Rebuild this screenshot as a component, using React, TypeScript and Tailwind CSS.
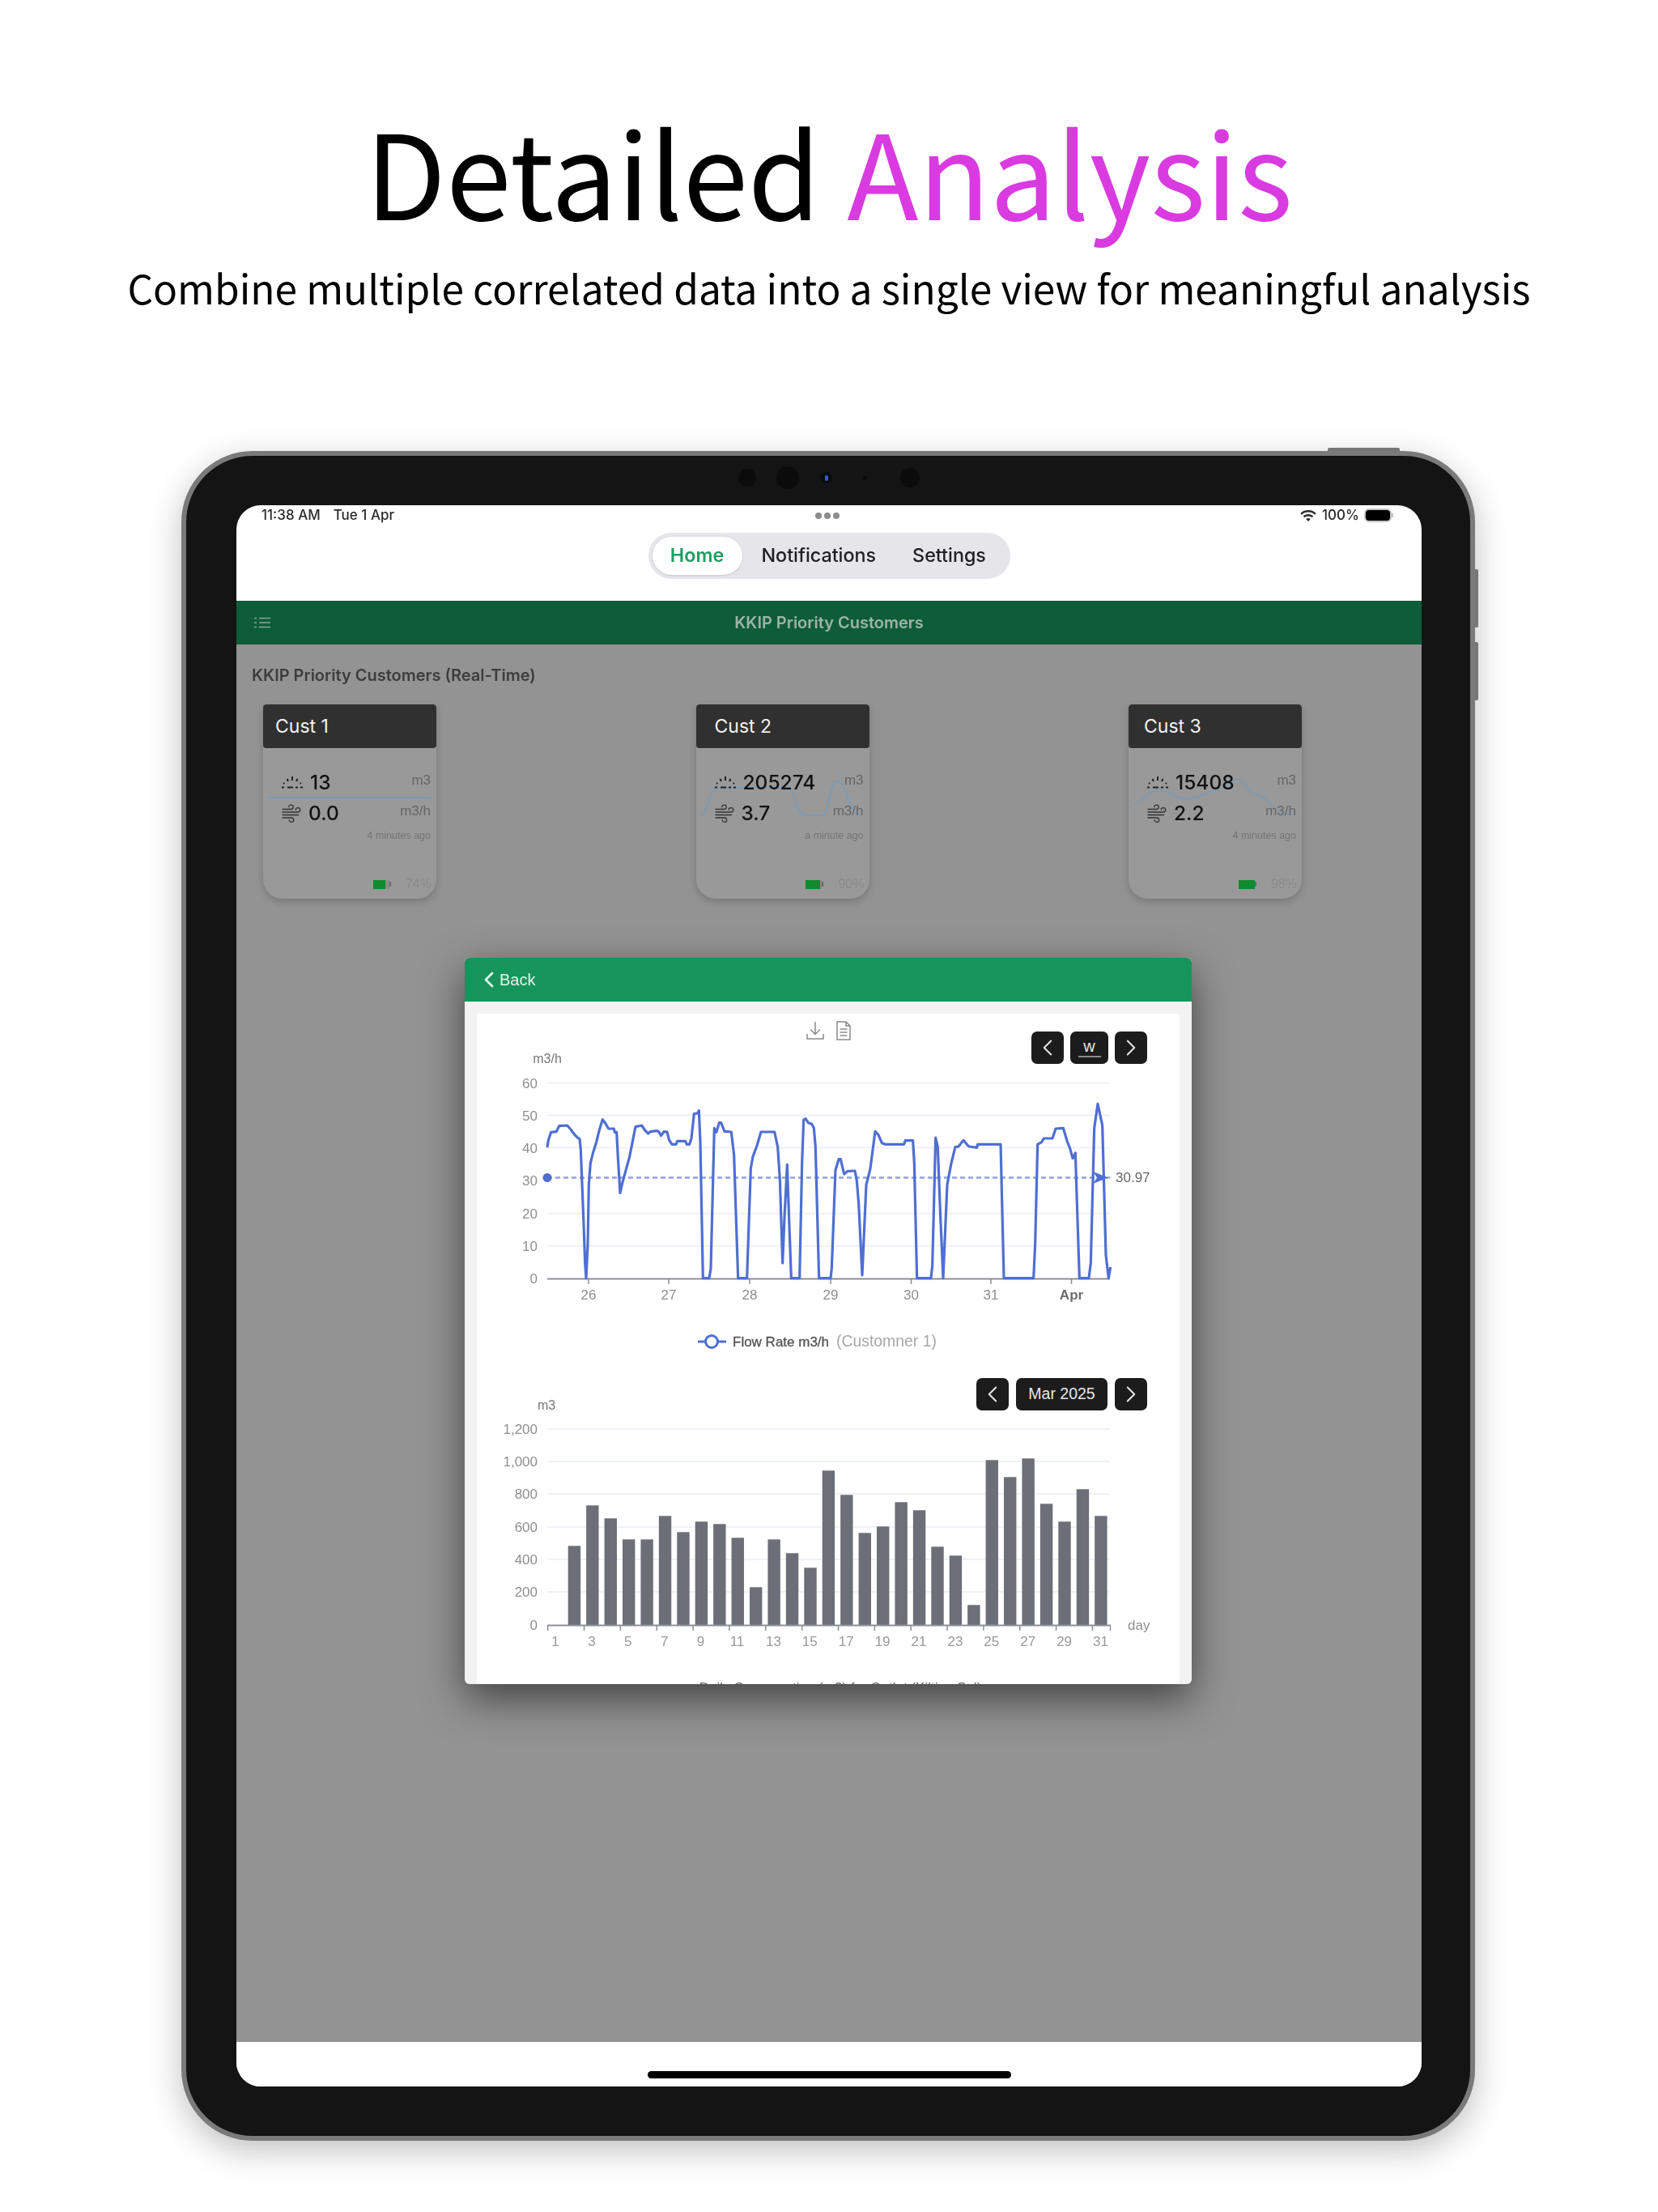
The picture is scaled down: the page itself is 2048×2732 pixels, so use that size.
import { ChevronLeft, ChevronRight } from "lucide-react";

type Customer = {
  name: string;
  titlePad: string;
  total: string;
  flow: string;
  updated: string;
  battery: number;
  spark: string;
};

const customers: Customer[] = [
  {
    name: "Cust 1",
    titlePad: "pl-[15px]",
    total: "13",
    flow: "0.0",
    updated: "4 minutes ago",
    battery: 74,
    spark: "M6 115H208",
  },
  {
    name: "Cust 2",
    titlePad: "pl-[23px]",
    total: "205274",
    flow: "3.7",
    updated: "a minute ago",
    battery: 90,
    spark: "M6 137C14 137 16 104 24 103L112 102C122 103 124 137 134 137H156C164 137 164 96 174 95C186 94 188 137 204 137",
  },
  {
    name: "Cust 3",
    titlePad: "pl-[19px]",
    total: "15408",
    flow: "2.2",
    updated: "4 minutes ago",
    battery: 98,
    spark: "M6 123C14 123 22 108 36 106C50 104 58 118 72 117C84 116 94 110 118 102C128 98 130 90 137 93C146 98 148 108 154 110C160 112 164 112 168 116C176 124 180 133 205 137",
  },
];

// flow trace, in 3x crop units; the two halves have different origins
const flowLeft = [
  [318, 742], [322, 715], [332, 685], [352, 683], [362, 662], [392, 660], [405, 675], [420, 695], [432, 707], [438, 710],
  [442, 750], [452, 1000], [458, 1170], [462, 1226], [468, 1100], [472, 880], [478, 800], [488, 760], [500, 722], [510, 680],
  [523, 638], [532, 650], [545, 672], [565, 672], [568, 685], [575, 685], [580, 780], [588, 910], [597, 870], [608, 830],
  [622, 780], [632, 730], [645, 665], [668, 660], [680, 678], [692, 690], [700, 683], [722, 680], [730, 682], [740, 698],
  [750, 683], [762, 684], [770, 715], [780, 730], [795, 730], [800, 718], [830, 718], [835, 730], [845, 730], [852, 708],
  [862, 617], [875, 615], [880, 605], [885, 720], [895, 1226], [918, 1226], [924, 1190], [937, 670], [945, 685], [955, 650],
  [962, 650], [975, 682], [1000, 684], [1010, 770], [1025, 1226], [1058, 1226], [1072, 820], [1080, 775], [1095, 735], [1110, 684],
  [1160, 684], [1172, 740], [1180, 860], [1190, 1170], [1197, 1000], [1207, 805], [1212, 950], [1222, 1226], [1253, 1226], [1262, 800],
  [1268, 640], [1275, 635], [1285, 650], [1298, 655], [1306, 670], [1312, 740], [1325, 1226], [1368, 1226], [1372, 1190], [1386, 825],
  [1398, 785], [1405, 785], [1418, 840], [1430, 830], [1458, 828], [1465, 865], [1472, 950], [1485, 1215],
];
const flowRight = [
  [90, 880], [105, 820], [123, 682], [135, 695], [148, 725], [160, 730], [230, 730], [235, 716], [263, 716], [268, 800],
  [278, 1226], [330, 1226], [335, 1180], [347, 705], [355, 740], [365, 1000], [375, 1226], [390, 880], [405, 800], [420, 740],
  [432, 738], [450, 715], [470, 738], [500, 742], [503, 730], [588, 730], [600, 1226], [710, 1226], [716, 1100], [725, 730],
  [740, 722], [748, 708], [780, 708], [792, 672], [820, 670], [835, 720], [845, 745], [855, 782], [865, 762], [880, 1226],
  [915, 1226], [922, 1170], [935, 670], [948, 580], [965, 660], [978, 1140], [988, 1226], [995, 1185],
];
const flowPoints = [
  ...flowLeft.map(([x, y]) => `${570 + x / 3},${1170 + y / 3}`),
  ...flowRight.map(([x, y]) => `${1040 + x / 3},${1170 + y / 3}`),
].join(" ");

const flowTicks = [
  { label: "60", y: 1337.7 },
  { label: "50", y: 1377.5 },
  { label: "40", y: 1417.5 },
  { label: "30", y: 1458 },
  { label: "20", y: 1498.7 },
  { label: "10", y: 1538.7 },
];
const flowDays = [
  { label: "26", x: 727 },
  { label: "27", x: 826 },
  { label: "28", x: 926 },
  { label: "29", x: 1026 },
  { label: "30", x: 1125.5 },
  { label: "31", x: 1224 },
  { label: "Apr", x: 1323.5 },
];

const usageTicks = [
  { label: "1,200", y: 1765 },
  { label: "1,000", y: 1805 },
  { label: "800", y: 1845 },
  { label: "600", y: 1886 },
  { label: "400", y: 1926 },
  { label: "200", y: 1966 },
];
// bar heights in px for day 2..31
const usageBars = [
  98, 148, 132, 106, 106, 135, 115, 128, 125, 108, 47, 106, 89, 71, 191, 161, 114, 122, 152, 142, 97, 86, 25, 204, 183, 206, 150, 128, 168, 135,
];

function SprayIcon() {
  return (
    <svg viewBox="0 0 26 16" className="h-[16px] w-[26px] shrink-0" fill="none" stroke="#222" strokeWidth="2">
      <path d="M0 14.500h3M7 14.500h7M17 14.500h3M23 14.500h3M13 1v5M6.500 4l1.500 3M19.500 4L18 7M2 9l1.500 1M24 9l-1.500 1" />
    </svg>
  );
}

function WindIcon() {
  return (
    <svg viewBox="0 0 24 24" className="h-[24px] w-[24px] shrink-0" fill="none" stroke="#333" strokeWidth="1.300" strokeLinecap="round">
      <path d="M1 7.500h10.500a2.700 2.700 0 1 0-2.700-2.700M1 11h19a2.700 2.700 0 1 0-2.700-2.700M1 14.500h19.500M1 18h11a2.700 2.700 0 1 1-2.700 2.700" />
    </svg>
  );
}

function Battery({ level }: { level: number }) {
  return (
    <div className="flex items-center">
      <div className="h-[11px] w-[20px] bg-[#8b8b8b]">
        <div className="h-full bg-[#0f8a2f]" style={{ width: `${level}%` }} />
      </div>
      <div className="h-[6px] w-[2px] bg-[#666]" />
    </div>
  );
}

function CustomerCard({ customer }: { customer: Customer }) {
  return (
    <div className="relative flex h-[240px] w-[214px] flex-col overflow-hidden rounded-b-[24px] rounded-t-[4px] bg-[#999999] shadow-[0_4px_10px_rgba(0,0,0,0.18)]">
      <svg viewBox="0 0 214 240" className="absolute inset-0 h-[240px] w-[214px]" fill="none" stroke="#7a9cb8" strokeWidth="1.800">
        <path d={customer.spark} />
      </svg>
      <div className={`flex h-[54px] items-center rounded-[4px] bg-[#303030] text-[23px] text-[#f2f2f2] ${customer.titlePad}`}>{customer.name}</div>
      <div className="relative mt-[23px] flex h-[38px] items-center pl-[23px] pr-[7px]">
        <SprayIcon />
        <span className="ml-[9px] text-[24.5px] font-medium text-[#111]">{customer.total}</span>
        <span className="ml-auto mb-[4px] font-['Liberation_Sans',sans-serif] text-[17px] text-[#666]">m3</span>
      </div>
      <div className="relative flex h-[38px] items-center pl-[23px] pr-[7px]">
        <WindIcon />
        <span className="ml-[9px] text-[24.5px] font-medium text-[#111]">{customer.flow}</span>
        <span className="ml-auto mb-[4px] font-['Liberation_Sans',sans-serif] text-[17px] text-[#666]">m3/h</span>
      </div>
      <div className="relative h-[18px] pr-[7px] text-right font-['Liberation_Sans',sans-serif] text-[12.5px] leading-[18px] text-[#757575]">{customer.updated}</div>
      <div className="relative mt-[39px] flex items-center justify-end gap-[18px] pr-[6px]">
        <Battery level={customer.battery} />
        <span className="font-['Liberation_Sans',sans-serif] text-[16px] text-[#8b8b8b]">{customer.battery}%</span>
      </div>
    </div>
  );
}

function NavButton({ dir }: { dir: "prev" | "next" }) {
  const Icon = dir === "prev" ? ChevronLeft : ChevronRight;
  return (
    <div className="flex h-[40px] w-[40px] items-center justify-center rounded-[7px] bg-[#1c1c1c] text-[#e6e6e6]">
      <Icon size={34} strokeWidth={1.4} />
    </div>
  );
}

function FlowChart() {
  return (
    <svg viewBox="589 1252 869 428" className="h-[428px] w-[869px] font-['Liberation_Sans',sans-serif]">
      {flowTicks.map((t) => (
        <g key={t.label}>
          {t.label !== "30" && <line x1="676" x2="1371" y1={t.y} y2={t.y} stroke="#eef1f8" strokeWidth="2" />}
          <text x="664" y={t.y + 6} textAnchor="end" fontSize="17" fill="#8e8e8e">{t.label}</text>
        </g>
      ))}
      <text x="664" y="1585" textAnchor="end" fontSize="17" fill="#8e8e8e">0</text>
      <text x="676" y="1313" textAnchor="middle" fontSize="16" fill="#777">m3/h</text>
      <line x1="676" x2="1371" y1="1579.500" y2="1579.500" stroke="#8d8f98" strokeWidth="2" />
      {flowDays.map((d) => (
        <g key={d.label}>
          <line x1={d.x} x2={d.x} y1="1580" y2="1586" stroke="#8d8f98" strokeWidth="1.500" />
          <text x={d.x} y="1605" textAnchor="middle" fontSize="17" fontWeight={d.label === "Apr" ? 700 : 400} fill={d.label === "Apr" ? "#6e6e6e" : "#8e8e8e"}>{d.label}</text>
        </g>
      ))}
      <line x1="676" x2="1371" y1="1454.500" y2="1454.500" stroke="#8ea2e4" strokeWidth="2.400" strokeDasharray="6 4" />
      <polyline points={flowPoints} fill="none" stroke="#4f6fd2" strokeWidth="3.200" strokeLinejoin="round" />
      <circle cx="676" cy="1454.500" r="5.500" fill="#4f6fd2" />
      <path d="M1350 1447L1369 1454.500L1350 1462L1355 1454.500Z" fill="#4f6fd2" />
      <text x="1378" y="1460" fontSize="17" fill="#666">30.97</text>
      <line x1="862" x2="897" y1="1657" y2="1657" stroke="#4f6fd2" strokeWidth="3" />
      <circle cx="879" cy="1657" r="7.500" fill="#fff" stroke="#4f6fd2" strokeWidth="3" />
      <text x="905" y="1663" fontSize="17" fill="#555" stroke="#555" strokeWidth="0.3">Flow Rate m3/h</text>
      <text x="1033" y="1663" fontSize="19.400" fill="#a8a8a8">(Customner 1)</text>
    </svg>
  );
}

function UsageChart() {
  return (
    <svg viewBox="589 1680 869 420" className="h-[420px] w-[869px] font-['Liberation_Sans',sans-serif]">
      {usageTicks.map((t) => (
        <g key={t.label}>
          <line x1="676" x2="1371" y1={t.y} y2={t.y} stroke="#eef1f8" strokeWidth="2" />
          <text x="664" y={t.y + 6} textAnchor="end" fontSize="17" fill="#8e8e8e">{t.label}</text>
        </g>
      ))}
      <text x="664" y="2013" textAnchor="end" fontSize="17" fill="#8e8e8e">0</text>
      <text x="675" y="1741" textAnchor="middle" fontSize="16" fill="#777">m3</text>
      {usageBars.map((h, i) => (
        <rect key={i} x={701.7 + i * 22.43} y={2007.3 - h} width="15.4" height={h} fill="#6c6e78" />
      ))}
      <line x1="676" x2="1372" y1="2007.500" y2="2007.500" stroke="#8d8f98" strokeWidth="2" />
      {Array.from({ length: 16 }, (_, i) => (
        <g key={i}>
          <line x1={676.7 + i * 44.85} x2={676.7 + i * 44.85} y1="2008" y2="2014" stroke="#8d8f98" strokeWidth="1.500" />
          <text x={686 + i * 44.9} y="2033" textAnchor="middle" fontSize="17" fill="#999">{i * 2 + 1}</text>
        </g>
      ))}
      <line x1="1371.500" x2="1371.500" y1="2008" y2="2014" stroke="#8d8f98" strokeWidth="1.500" />
      <text x="1393" y="2013" fontSize="17" fill="#8e8e8e">day</text>
      <text x="1038" y="2090" textAnchor="middle" fontSize="17" fill="#666">Daily Consumption (m3) for Outlet (Kilting Sal)</text>
    </svg>
  );
}

function DetailModal() {
  return (
    <div className="absolute left-[282px] top-[559px] flex h-[897px] w-[898px] flex-col overflow-hidden rounded-[6px] bg-[#f2f2f2] font-['Liberation_Sans',sans-serif] shadow-[0_18px_50px_rgba(0,0,0,0.55)]">
      <div className="flex h-[54px] shrink-0 items-center bg-[#15955b] pl-[14px] text-[#e8f2ec]">
        <ChevronLeft size={32} strokeWidth={2} />
        <span className="-ml-[3px] text-[20px]">Back</span>
      </div>
      <div className="mx-[15px] mt-[15px] flex-1 rounded-t-[4px] bg-white">
        <div className="relative h-[428px]">
          <FlowChart />
          <div className="absolute left-[407px] top-[9px] flex items-center gap-[15px] text-[#8a8a8a]">
            <svg viewBox="0 0 22 24" className="h-[24px] w-[22px]" fill="none" stroke="currentColor" strokeWidth="1.500">
              <path d="M11 1v15M5 10.500l6 6 6-6M1 16v6h20v-6" />
            </svg>
            <svg viewBox="0 0 18 24" className="h-[24px] w-[18px]" fill="none" stroke="currentColor" strokeWidth="1.500">
              <path d="M1 1h11l5 5v17H1zM12 1v5h5M4.500 10h9M4.500 14h9M4.500 18h9" />
            </svg>
          </div>
          <div className="absolute right-[40px] top-[22px] flex gap-[8px]">
            <NavButton dir="prev" />
            <div className="flex h-[40px] w-[47px] flex-col items-center justify-center rounded-[7px] bg-[#1c1c1c] text-[20px] leading-[20px] text-[#e6e6e6]">
              <span>w</span>
              <div className="mt-[2px] h-[2px] w-[28px] bg-[#8a8a8a]" />
            </div>
            <NavButton dir="next" />
          </div>
        </div>
        <div className="relative h-[400px] overflow-hidden">
          <UsageChart />
          <div className="absolute right-[40px] top-[22px] flex gap-[9px]">
            <NavButton dir="prev" />
            <div className="flex h-[40px] w-[113px] items-center justify-center rounded-[7px] bg-[#1c1c1c] text-[19.5px] text-[#e6e6e6]">Mar 2025</div>
            <NavButton dir="next" />
          </div>
        </div>
      </div>
    </div>
  );
}

function StatusBar() {
  return (
    <div className="grid h-[20px] grid-cols-[1fr_auto_1fr] items-center pl-[31px] pr-[35px] text-[17px] font-medium text-[#2b2b2b]">
      <div className="flex gap-[16px]">
        <span>11:38 AM</span>
        <span>Tue 1 Apr</span>
      </div>
      <div className="flex gap-[3px]">
        <div className="h-[8px] w-[8px] rounded-full bg-[#8c8c8c]" />
        <div className="h-[8px] w-[8px] rounded-full bg-[#8c8c8c]" />
        <div className="h-[8px] w-[8px] rounded-full bg-[#8c8c8c]" />
      </div>
      <div className="flex items-center justify-end">
        <svg viewBox="0 0 20 14" className="h-[14px] w-[20px]" fill="#2b2b2b">
          <path d="M10 0C6 0 2.800 1.500 0.300 3.900L2 5.700C4 3.700 6.900 2.500 10 2.500s6 1.200 8 3.200l1.700-1.800C17.200 1.500 14 0 10 0zM10 5C7.500 5 5.300 6 3.700 7.500L5.400 9.300C6.600 8.200 8.200 7.500 10 7.500s3.400 0.700 4.600 1.800l1.700-1.800C14.700 6 12.500 5 10 5zM10 10c-1.100 0-2 0.400-2.800 1.100L10 14l2.800-2.900C12 10.400 11.100 10 10 10z" />
        </svg>
        <span className="ml-[7px] w-[46px] text-[17px]">100%</span>
        <div className="ml-[6px] flex items-center">
          <div className="h-[17px] w-[34px] rounded-[6px] border-2 border-[#c6c6c6] bg-black" />
          <div className="h-[5px] w-[2px] bg-[#c6c6c6]" />
        </div>
      </div>
    </div>
  );
}

function Tabs() {
  return (
    <div className="mx-auto mt-[14px] flex h-[57px] w-[447px] items-center rounded-full bg-[#e5e5ea] p-[5px] text-[23.3px] font-medium text-[#1f1f1f]">
      <div className="flex h-[47px] w-[111px] items-center justify-center rounded-full bg-white font-semibold text-[#1f9d62] shadow-sm">Home</div>
      <span className="ml-[24px]">Notifications</span>
      <span className="ml-[45px]">Settings</span>
    </div>
  );
}

export default function App() {
  return (
    <div className="flex h-[2732px] w-[2048px] flex-col items-center overflow-hidden bg-white font-['Noto_Sans_CJK_SC',sans-serif]">
      <h1 className="mt-[114px] text-[145px] font-normal leading-[190px] text-black">
        Detailed <span className="text-[#d93be0]">Analysis</span>
      </h1>
      <p className="mt-[15px] text-[49.6px] leading-[70px] text-black">Combine multiple correlated data into a single view for meaningful analysis</p>

      <div className="relative mr-[2px] mt-[168px] h-[2087px] w-[1598px] rounded-[88px] border-[6px] border-[#7a7a7a] bg-[#141414] pl-[62px] pt-[61px] shadow-[0_12px_40px_rgba(0,0,0,0.25)]">
        <div className="absolute -top-[10px] right-[87px] h-[4px] w-[89px] rounded-t-[2px] bg-[#777]" />
        <div className="absolute -right-[10px] top-[140px] h-[72px] w-[4px] rounded-r-[2px] bg-[#777]" />
        <div className="absolute -right-[10px] top-[230px] h-[72px] w-[4px] rounded-r-[2px] bg-[#777]" />
        <div className="absolute left-[682px] top-[16px] h-[22px] w-[22px] rounded-full bg-[#0b0b0b]" />
        <div className="absolute left-[729px] top-[13px] h-[28px] w-[28px] rounded-full bg-[#0b0b0b]" />
        <div className="absolute left-[784px] top-[20px] flex h-[14px] w-[14px] items-center justify-center rounded-full bg-[#0b0b0b]">
          <div className="h-[7px] w-[4px] rounded-full bg-[#2f62c8]" />
        </div>
        <div className="absolute left-[836px] top-[25px] h-[5px] w-[5px] rounded-full bg-[#0b0b0b]" />
        <div className="absolute left-[882px] top-[15px] h-[24px] w-[24px] rounded-full bg-[#0b0b0b]" />

        <div className="relative flex h-[1953px] w-[1464px] flex-col overflow-hidden rounded-[30px] bg-white font-['Inter',sans-serif] blur-[0.5px]">
          <div className="h-[118px] shrink-0">
            <StatusBar />
            <Tabs />
          </div>
          <div className="relative flex h-[54px] shrink-0 items-center justify-center bg-[#0e5c38] text-[20px] font-semibold text-[#9db4a8]">
            <svg viewBox="0 0 20 14" className="absolute left-[22px] top-[20px] h-[14px] w-[20px]" fill="none" stroke="#8aa597" strokeWidth="1.600">
              <path d="M0 1.500h3M6 1.500h14M0 7h3M6 7h14M0 12.500h3M6 12.500h14" />
            </svg>
            KKIP Priority Customers
          </div>
          <div className="flex-1 bg-[#939393] pl-[19px] pt-[26px]">
            <div className="text-[20px] font-semibold leading-[24px] text-[#3d3d3d]">KKIP Priority Customers (Real-Time)</div>
            <div className="ml-[14px] mt-[24px] flex gap-[320.5px]">
              {customers.map((c) => (
                <CustomerCard key={c.name} customer={c} />
              ))}
            </div>
          </div>
          <div className="flex h-[55px] shrink-0 justify-center bg-white pt-[36px]">
            <div className="h-[9px] w-[449px] rounded-full bg-black" />
          </div>
          <DetailModal />
        </div>
      </div>
    </div>
  );
}
